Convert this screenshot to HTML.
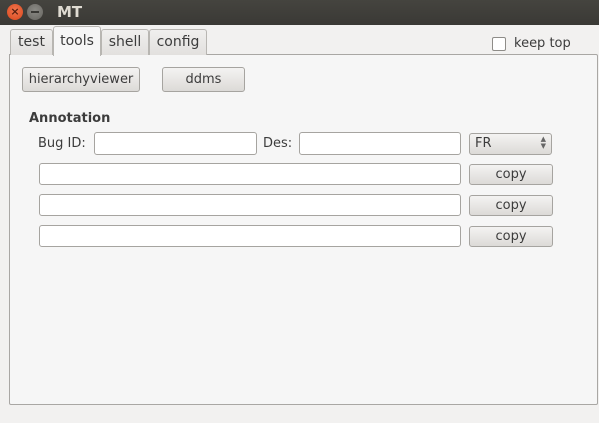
<!DOCTYPE html>
<html><head><meta charset="utf-8"><style>
*{box-sizing:border-box;margin:0;padding:0}
body{width:599px;height:423px;background:#f2f1f0;font-family:"DejaVu Sans","Liberation Sans",sans-serif;font-size:13px;color:#3c3c3c;position:relative;overflow:hidden}
.a{position:absolute}
.title{left:0;top:0;width:599px;height:25px;background:linear-gradient(#45443f,#3a3935)}
.tab{position:absolute;top:29px;height:26px;border:1px solid #b8b6b2;border-bottom:none;border-radius:3px 3px 0 0;background:linear-gradient(#f0efee,#e2e0de);text-align:center;line-height:24px;font-size:14px}
.panel{left:9px;top:54px;width:589px;height:351px;border:1px solid #a9a7a4;background:#f6f6f6;border-radius:0 2px 2px 2px}
.btn{position:absolute;border:1px solid #a6a4a0;border-radius:3px;background:linear-gradient(#f4f3f2,#dcdad7);text-align:center;font-size:13px}
.inp{position:absolute;border:1px solid #a6a4a0;border-radius:3px;background:#fff}
</style></head><body>
<div class="a title"></div>
<div class="a" style="left:7px;top:4px;width:16px;height:16px;border-radius:50%;background:radial-gradient(circle at 50% 40%,#f0764e,#d9461c);color:#5a2010;font-size:11px;line-height:16px;text-align:center;font-weight:bold">×</div>
<div class="a" style="left:27px;top:4px;width:16px;height:16px;border-radius:50%;background:radial-gradient(circle at 50% 40%,#8c8b86,#65645f)"><div style="margin:7px 4px;height:2px;background:#3a3935"></div></div>
<div class="a" style="left:57px;top:3px;color:#dfdbd2;font-weight:bold;font-size:15px">MT</div>
<div class="a panel"></div>
<div class="tab" style="left:10px;width:43px">test</div>
<div class="tab" style="left:101px;width:48px">shell</div>
<div class="tab" style="left:149px;width:58px">config</div>
<div class="tab" style="left:53px;top:26px;height:30px;width:48px;background:#f6f6f6;line-height:28px">tools</div>
<div class="a" style="left:492px;top:37px;width:14px;height:14px;border:1px solid #8e8c88;border-radius:2px;background:#fff"></div>
<div class="a" style="left:514px;top:36px;font-size:13px">keep top</div>
<div class="btn" style="left:22px;top:67px;width:118px;height:25px;line-height:23px">hierarchyviewer</div>
<div class="btn" style="left:162px;top:67px;width:83px;height:25px;line-height:23px">ddms</div>
<div class="a" style="left:29px;top:111px;font-weight:bold;font-size:13px">Annotation</div>
<div class="a" style="left:38px;top:136px">Bug ID:</div>
<div class="inp" style="left:94px;top:132px;width:163px;height:23px"></div>
<div class="a" style="left:263px;top:136px">Des:</div>
<div class="inp" style="left:299px;top:132px;width:162px;height:23px"></div>
<div class="btn" style="left:469px;top:133px;width:83px;height:22px;text-align:left;padding-left:5px;line-height:20px">FR<span style="position:absolute;right:5px;top:2px;font-size:7px;line-height:7px;color:#666">▲<br>▼</span></div>
<div class="inp" style="left:39px;top:163px;width:422px;height:22px"></div>
<div class="btn" style="left:469px;top:164px;width:84px;height:21px;line-height:19px">copy</div>
<div class="inp" style="left:39px;top:194px;width:422px;height:22px"></div>
<div class="btn" style="left:469px;top:195px;width:84px;height:21px;line-height:19px">copy</div>
<div class="inp" style="left:39px;top:225px;width:422px;height:22px"></div>
<div class="btn" style="left:469px;top:226px;width:84px;height:21px;line-height:19px">copy</div>
</body></html>
